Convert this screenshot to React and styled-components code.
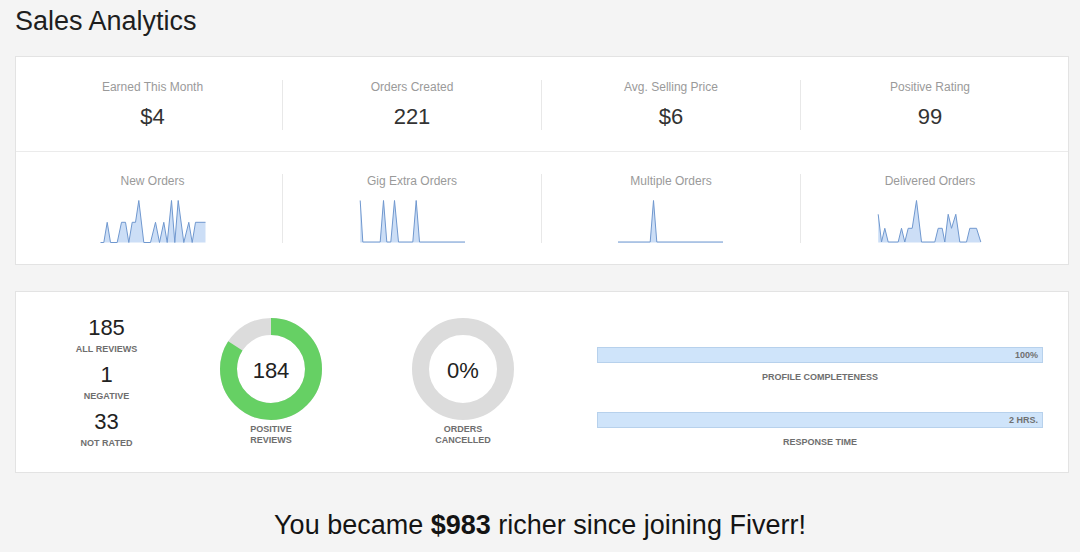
import React from 'react';
import styled, { createGlobalStyle } from 'styled-components';

const GlobalStyle = createGlobalStyle`
  body {
    margin: 0;
    background: #f4f4f4;
    font-family: "Liberation Sans", Arial, sans-serif;
  }
`;

const Page = styled.div`
  padding: 6px 11px 0 15px;
`;

const Title = styled.h1`
  margin: 0 0 20px;
  font-size: 27px;
  line-height: 30px;
  font-weight: normal;
  color: #1e1e1e;
`;

const Card = styled.div`
  background: #fff;
  border: 1px solid #e3e3e3;
`;

const StatRow = styled.div`
  display: grid;
  grid-template-columns: repeat(4, 1fr);
  padding: ${p => p.$pad};
  & + & {
    border-top: 1px solid #ebebeb;
  }
`;

const StatCol = styled.div`
  display: flex;
  flex-direction: column;
  align-items: center;
  & + & {
    border-left: 1px solid #e8e8e8;
  }
`;

const StatLabel = styled.div`
  font-size: 12px;
  line-height: 14px;
  color: #9a9a9a;
`;

const StatValue = styled.div`
  margin-top: 10px;
  font-size: 22px;
  line-height: 26px;
  color: #333;
`;

const SparkSvg = styled.svg`
  display: block;
  margin-top: 11px;
`;

const Summary = styled(Card)`
  margin-top: 26px;
  height: 180px;
  display: flex;
  align-items: center;
`;

const Counts = styled.div`
  width: 181px;
  display: flex;
  flex-direction: column;
  align-items: center;
`;

const CountNum = styled.div`
  font-size: 22px;
  line-height: 24px;
  color: #222;
  margin-top: ${p => (p.$first ? 0 : 8)}px;
`;

const SmallCaps = styled.div`
  font-size: 9px;
  line-height: ${p => p.$lh || 12}px;
  font-weight: bold;
  text-transform: uppercase;
  color: #6e6e6e;
  text-align: center;
  margin-top: ${p => p.$mt || 0}px;
`;

const DonutCol = styled.div`
  width: 102px;
  margin-left: ${p => p.$ml}px;
  display: flex;
  flex-direction: column;
  align-items: center;
`;

const Bars = styled.div`
  flex: 1;
  align-self: flex-start;
  margin: 55px 25px 0 83px;
`;

const BarGroup = styled.div`
  margin-top: ${p => p.$mt}px;
`;

const Bar = styled.div`
  height: 14px;
  background: #cfe4fa;
  border: 1px solid #b7d1ec;
  font-size: 9px;
  line-height: 14px;
  font-weight: bold;
  color: #707070;
  text-align: right;
  padding-right: 4px;
`;

const Footer = styled.div`
  margin-top: 36px;
  text-align: center;
  font-size: 27px;
  line-height: 32px;
  color: #141414;
  padding-right: 4px;
`;

const stats = [
  ['Earned This Month', '$4'],
  ['Orders Created', '221'],
  ['Avg. Selling Price', '$6'],
  ['Positive Rating', '99'],
];

const sparks = [
  {
    label: 'New Orders',
    pts: [[0.5,43.5],[3.8,43.5],[7.2,23.3],[10.5,43.5],[17.2,43.5],[21.5,23.3],[25.5,23.3],[28.8,43.5],[32.2,23.3],[35.5,23.3],[38.8,1.5],[43.8,43.5],[50.5,43.5],[55.5,23.3],[59.5,43.5],[63.8,23.3],[67.2,43.5],[71.5,1.5],[74.8,43.5],[78.2,1.5],[83.8,43.5],[88.8,23.3],[92.2,43.5],[95.5,23.3],[105.5,23.3]],
  },
  {
    label: 'Gig Extra Orders',
    pts: [[1.2,1.5],[3.8,43],[21.2,43],[24.5,1.5],[27.8,43],[31.8,43],[35.5,1.5],[39.5,43],[53.8,43],[57.2,1.5],[60.5,43],[106,43]],
  },
  {
    label: 'Multiple Orders',
    pts: [[0,43],[32.2,43],[35.5,1.5],[38.8,43],[105,43]],
  },
  {
    label: 'Delivered Orders',
    pts: [[1.2,15.3],[4.5,43],[7.8,29.3],[11.2,43],[21.2,43],[24.5,29.3],[27.8,43],[31.2,29.3],[35.2,29.3],[39.5,1.5],[44.5,43],[57.8,43],[61.2,29.3],[65.2,29.3],[67.8,43],[71.2,15.3],[74.5,29.3],[78.8,15.3],[82.8,43],[89.5,43],[92.8,29.3],[99.5,29.3],[103.8,43]],
  },
];

function Spark({ pts }) {
  const line = pts.map(p => p.join(',')).join(' ');
  const first = pts[0][0];
  const last = pts[pts.length - 1][0];
  const area = `${first},43.5 ${line} ${last},43.5`;
  return (
    <SparkSvg width="106" height="44" viewBox="0 0 106 44">
      <polygon points={area} fill="#c3d8f4" opacity="0.85" />
      <polyline points={line} fill="none" stroke="#7098cf" strokeWidth="1" strokeLinejoin="round" />
    </SparkSvg>
  );
}

function Donut({ value, share }) {
  const r = 42.5;
  const c = 2 * Math.PI * r;
  return (
    <svg width="102" height="102" viewBox="0 0 102 102">
      <circle cx="51" cy="51" r={r} fill="none" stroke="#dcdcdc" strokeWidth="17" />
      {share > 0 && (
        <circle
          cx="51" cy="51" r={r} fill="none" stroke="#66d064" strokeWidth="17"
          strokeDasharray={`${c * share} ${c}`}
          transform="rotate(-90 51 51)"
        />
      )}
      <text
        x="51" y="52" textAnchor="middle" dominantBaseline="central"
        fontSize="22" fill="#222" fontFamily="Liberation Sans, Arial, sans-serif"
      >
        {value}
      </text>
    </svg>
  );
}

export default function App() {
  return (
    <Page>
      <GlobalStyle />
      <Title>Sales Analytics</Title>
      <Card>
        <StatRow $pad="23px 9px 21px 7px">
          {stats.map(([label, value]) => (
            <StatCol key={label}>
              <StatLabel>{label}</StatLabel>
              <StatValue>{value}</StatValue>
            </StatCol>
          ))}
        </StatRow>
        <StatRow $pad="22px 9px 21px 7px">
          {sparks.map(s => (
            <StatCol key={s.label}>
              <StatLabel>{s.label}</StatLabel>
              <Spark pts={s.pts} />
            </StatCol>
          ))}
        </StatRow>
      </Card>
      <Summary>
        <Counts>
          <CountNum $first>185</CountNum>
          <SmallCaps $mt={3}>All Reviews</SmallCaps>
          <CountNum>1</CountNum>
          <SmallCaps $mt={3}>Negative</SmallCaps>
          <CountNum>33</CountNum>
          <SmallCaps $mt={3}>Not Rated</SmallCaps>
        </Counts>
        <DonutCol $ml={23}>
          <Donut value="184" share={0.84} />
          <SmallCaps $mt={4} $lh={11}>Positive<br />Reviews</SmallCaps>
        </DonutCol>
        <DonutCol $ml={90}>
          <Donut value="0%" share={0} />
          <SmallCaps $mt={4} $lh={11}>Orders<br />Cancelled</SmallCaps>
        </DonutCol>
        <Bars>
          <BarGroup $mt={0}>
            <Bar>100%</Bar>
            <SmallCaps $mt={8}>Profile Completeness</SmallCaps>
          </BarGroup>
          <BarGroup $mt={29}>
            <Bar>2 HRS.</Bar>
            <SmallCaps $mt={8}>Response Time</SmallCaps>
          </BarGroup>
        </Bars>
      </Summary>
      <Footer>
        You became <b>$983</b> richer since joining Fiverr!
      </Footer>
    </Page>
  );
}
